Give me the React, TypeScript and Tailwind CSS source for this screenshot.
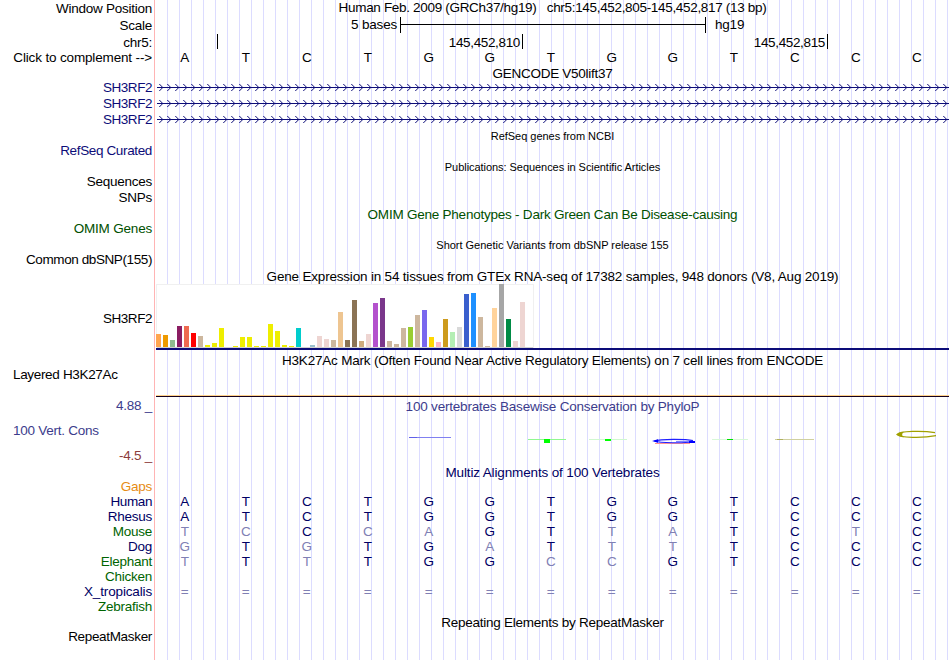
import { clsx } from "clsx";

const LABELS = [
  { text: "Window Position", h: 17 },
  { text: "Scale", h: 17 },
  { text: "chr5:", h: 15 },
  { text: "Click to complement -->", h: 30, tracking: "tracking-[-0.15px]" },
  { text: "SH3RF2", h: 16, color: "text-[#0c0c78]", tracking: "tracking-[-0.45px]" },
  { text: "SH3RF2", h: 16, color: "text-[#0c0c78]", tracking: "tracking-[-0.45px]" },
  { text: "SH3RF2", h: 31, color: "text-[#0c0c78]", tracking: "tracking-[-0.45px]" },
  { text: "RefSeq Curated", h: 31, color: "text-[#0c0c78]", tracking: "tracking-[-0.36px]" },
  { text: "Sequences", h: 16 },
  { text: "SNPs", h: 31 },
  { text: "OMIM Genes", h: 31, color: "text-[#005000]", tracking: "tracking-[-0.2px]" },
  { text: "Common dbSNP(155)", h: 59, tracking: "tracking-[-0.4px]" },
  { text: "SH3RF2", h: 56, tracking: "tracking-[-0.45px]" },
  { text: "Layered H3K27Ac", h: 31, left: true, tracking: "tracking-[-0.33px]" },
  { text: "4.88 _", h: 25, color: "text-[#3c3c8c]" },
  { text: "100 Vert. Cons", h: 25, color: "text-[#3c3c8c]", left: true },
  { text: "-4.5 _", h: 31, color: "text-[#8c3c3c]" },
  { text: "Gaps", h: 15, color: "text-[#e68c14]" },
  { text: "Human", h: 15, color: "text-[#000064]", tracking: "tracking-[-0.4px]" },
  { text: "Rhesus", h: 15, color: "text-[#000064]" },
  { text: "Mouse", h: 15, color: "text-[#006400]" },
  { text: "Dog", h: 15, color: "text-[#000064]" },
  { text: "Elephant", h: 15, color: "text-[#006400]" },
  { text: "Chicken", h: 15, color: "text-[#006400]" },
  { text: "X_tropicalis", h: 15, color: "text-[#000064]", tracking: "tracking-[-0.15px]" },
  { text: "Zebrafish", h: 30, color: "text-[#006400]" },
  { text: "RepeatMasker", h: 16, tracking: "tracking-[-0.33px]" },
];

const SEQUENCE = "ATCTGGTGGTCCC";

// lower case marks a base that differs from the human one
const ALIGNMENTS = [
  "ATCTGGTGGTCCC",
  "ATCTGGTGGTCCC",
  "tcCcaGTtaTCtC",
  "gTgTGaTttTCCC",
  "tTtTGGccGTCCC",
  "",
  "=============",
  "",
];

// GTEx tissues: [height, color]
const TISSUES: [number, string][] = [
  [13, "#ffa54f"], [12, "#ee9a00"], [7, "#8fbc8f"], [21, "#8b1c62"], [21, "#ee6a50"], [14, "#ff0000"],
  [11, "#cdb79e"], [2, "#eeee00"], [4, "#eeee00"], [19, "#eeee00"], [0, "#eeee00"], [1, "#eeee00"],
  [10, "#eeee00"], [10, "#eeee00"], [1, "#eeee00"], [1, "#eeee00"], [23, "#eeee00"], [16, "#eeee00"],
  [2, "#eeee00"], [1, "#eeee00"], [19, "#00cdcd"], [0, "#ee82ee"], [2, "#9ac0cd"], [11, "#eed5d2"],
  [8, "#eed5d2"], [7, "#cdb79e"], [35, "#eec591"], [7, "#8b7355"], [47, "#8b7355"], [6, "#cdaa7d"],
  [13, "#eed5d2"], [44, "#b452cd"], [49, "#7a378b"], [6, "#cdb79e"], [3, "#cdb79e"], [19, "#cdb79e"],
  [20, "#9acd32"], [32, "#cdb79e"], [37, "#7a67ee"], [10, "#ffd700"], [5, "#ffb6c1"], [28, "#cd9b1d"],
  [15, "#b4eeb4"], [20, "#d9d9d9"], [53, "#3a5fcd"], [54, "#1e90ff"], [30, "#cdb79e"], [1, "#cdb79e"],
  [39, "#ffd39b"], [63, "#a6a6a6"], [28, "#008b45"], [6, "#eed5d2"], [45, "#eed5d2"], [0, "#ff00ff"],
];

function Title({ children, className }: { children: string; className?: string }) {
  return <div className={clsx("h-4 whitespace-pre text-center leading-4", className)}>{children}</div>;
}

function Bases({ row, className }: { row: string; className?: string }) {
  return (
    <div className={clsx("flex h-[15px] tracking-normal", className ?? "leading-4")}>
      {row.split("").map((base, i) => (
        <span
          key={i}
          className={clsx("w-[61px] shrink-0 pr-[3.5px] text-center", /[a-z=]/.test(base) && "text-[#8080b4]")}
        >
          {base.toUpperCase()}
        </span>
      ))}
    </div>
  );
}

function Transcript() {
  return (
    <svg className="block h-4 w-[793px] shrink-0" viewBox="0 0 793 16">
      <path d="M1 8.5H793" stroke="#0c0c78" fill="none" />
      {Array.from({ length: 99 }, (_, i) => (
        <path key={i} d="M0 0L3.5 3.5L0 7" transform={`translate(${3.3 + i * 8} 5)`} stroke="#0c0c78" fill="none" />
      ))}
    </svg>
  );
}

function Conservation() {
  return (
    <svg className="block h-[46px] w-[793px]" viewBox="156 419 793 46">
      <path d="M409 437.5H451" stroke="#8080f0" />
      <path d="M409 437.5H417" stroke="#6060e8" />
      <path d="M528 439.5H566" stroke="#90f890" />
      <path d="M544 439H550V443H544Z" fill="#00ff00" />
      <path d="M589 439.5H627" stroke="#d0f8d0" />
      <path d="M605 439H611V441H605Z" fill="#00ff00" />
      <path d="M655 443.5H690" stroke="#ff9090" />
      <path d="M693 440.6C686 439 660 438.8 655 441C660 443.2 684 443 693 442" stroke="#2020ff" strokeWidth="1.1" fill="none" />
      <path d="M676 441.5H690" stroke="#8080ff" />
      <path d="M652 441L658 439.3V442.7ZM689 441H695V443H689Z" fill="#0000ff" />
      <path d="M712 439.5H748" stroke="#d8f8d8" />
      <path d="M727 439.5H733" stroke="#00e000" />
      <path d="M775 439.5H814" stroke="#d0d0a0" />
      <path d="M777 439.5H783" stroke="#b0b060" />
      <path d="M935 432.7C923 430.5 899 431 898 434.4C899 438 923 438.3 936 435.7" stroke="#a0a000" strokeWidth="1.3" fill="none" />
      <path d="M896 434.4C898 432.5 901 432 904 431.7C901.5 433.5 901.5 435.5 904 437.3C901 437 898 436.4 896 434.4Z" fill="#a0a000" />
    </svg>
  );
}

export default function App() {
  return (
    <div className="flex h-[660px] w-[950px] overflow-hidden bg-white font-['Liberation_Sans',Arial,sans-serif] text-[13.5px] text-black">
      <div className="flex w-[155px] shrink-0 flex-col border-r border-[#ffb4b4] pt-px">
        {LABELS.map((label, i) => (
          <div
            key={i}
            className={clsx(
              "shrink-0 whitespace-nowrap leading-4",
              label.left ? "pl-[13px]" : "pr-0.5 text-right",
              label.tracking ?? "tracking-[-0.25px]",
              label.color,
            )}
            style={{ height: label.h }}
          >
            {label.text}
          </div>
        ))}
      </div>

      <div className="flex w-[794px] shrink-0 flex-col border-l border-white bg-[linear-gradient(to_right,transparent_11px,#dcdcff_11px)] bg-[size:12px_100%] tracking-[-0.2px]">
        <Title className="tracking-[-0.32px]">
          {"Human Feb. 2009 (GRCh37/hg19)   chr5:145,452,805-145,452,817 (13 bp)"}
        </Title>
        <div className="flex h-[17px] items-center">
          <span className="w-[241px] pt-px text-right">5 bases</span>
          <div className="ml-[3px] flex h-4 w-[306px] items-center border-x border-black">
            <div className="h-px w-full bg-black" />
          </div>
          <span className="ml-[9px] pt-px">hg19</span>
        </div>
        <div className="mt-px flex h-[15px] leading-[17px] tracking-[-0.35px]">
          <div className="h-[15px] w-[62px] border-r border-black" />
          <div className="h-[15px] w-[305px] border-r border-black pr-0.5 text-right">145,452,810</div>
          <div className="h-[15px] w-[305px] border-r border-black pr-0.5 text-right">145,452,815</div>
        </div>
        <Bases row={SEQUENCE} className="leading-[17px]" />
        <Title className="mt-0.5 tracking-[-0.27px]">GENCODE V50lift37</Title>
        <div className="-mt-[3px] flex flex-col">
          <Transcript />
          <Transcript />
          <Transcript />
        </div>
        <Title className="mt-px text-[11px] tracking-[-0.03px]">RefSeq genes from NCBI</Title>
        <Title className="mt-[15px] text-[11px] tracking-[-0.05px]">Publications: Sequences in Scientific Articles</Title>
        <Title className="mt-8 text-[#005000] tracking-[-0.23px]">OMIM Gene Phenotypes - Dark Green Can Be Disease-causing</Title>
        <Title className="mt-[14px] text-[11px] tracking-[-0.02px]">Short Genetic Variants from dbSNP release 155</Title>
        <Title className="mt-4 tracking-[-0.19px]">Gene Expression in 54 tissues from GTEx RNA-seq of 17382 samples, 948 donors (V8, Aug 2019)</Title>
        <div className="-mt-px flex h-16 w-[378px] items-end gap-0.5 bg-white pb-px shadow-[inset_0_1px_#f0f0f0,inset_1px_0_#f0f0f0,inset_-1px_0_#f0f0f0,inset_0_-1px_#d0d0d0]">
          {TISSUES.map(([h, color], i) => (
            <div key={i} className="w-[5px] shrink-0" style={{ height: h, backgroundColor: color }} />
          ))}
        </div>
        <div className="h-0.5 bg-[#0c0c78]" />
        <Title className="mt-[3px]">H3K27Ac Mark (Often Found Near Active Regulatory Elements) on 7 cell lines from ENCODE</Title>
        <div className="mt-[26px] h-0.5 border-b border-[#14001e] bg-[#ffd28c]" />
        <Title className="mt-0.5 text-[#3c3c8c]">100 vertebrates Basewise Conservation by PhyloP</Title>
        <div className="mt-1">
          <Conservation />
        </div>
        <Title className="text-[#000064] tracking-[-0.14px]">Multiz Alignments of 100 Vertebrates</Title>
        <div className="mt-[13px] text-[#000064]">
          {ALIGNMENTS.map((row, i) => (
            <Bases key={i} row={row} />
          ))}
        </div>
        <Title className="mt-px tracking-[-0.25px]">Repeating Elements by RepeatMasker</Title>
      </div>
    </div>
  );
}
